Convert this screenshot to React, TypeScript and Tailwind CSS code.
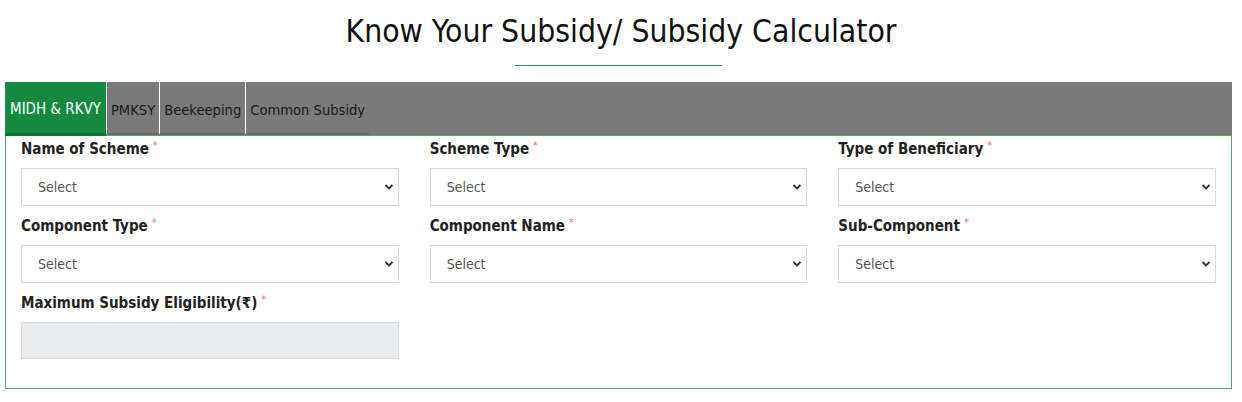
const fontStack = { fontFamily: '"DejaVu Sans Condensed", "DejaVu Sans", Tahoma, sans-serif' };

type Field = { label: string; kind: 'select' | 'input' };

const fields: Field[] = [
  { label: 'Name of Scheme', kind: 'select' },
  { label: 'Scheme Type', kind: 'select' },
  { label: 'Type of Beneficiary', kind: 'select' },
  { label: 'Component Type', kind: 'select' },
  { label: 'Component Name', kind: 'select' },
  { label: 'Sub-Component', kind: 'select' },
  { label: 'Maximum Subsidy Eligibility(₹)', kind: 'input' },
];

const tabs = ['MIDH & RKVY', 'PMKSY', 'Beekeeping', 'Common Subsidy'];

function Chevron() {
  return (
    <svg width="10" height="8" viewBox="0 0 10 8" aria-hidden="true">
      <polyline points="1.5,2 5,5.5 8.5,2" fill="none" stroke="#333" strokeWidth="1.8" />
    </svg>
  );
}

function FormField({ field }: { field: Field }) {
  return (
    <div className="flex flex-col">
      <label className="text-[15px] font-bold leading-[22px] text-[#222] mb-[8px]">
        {field.label}
        <sup className="ml-[4px] text-[11px] font-normal text-[#e07a7a] relative top-[-5px]">*</sup>
      </label>
      {field.kind === 'select' ? (
        <div className="h-[38px] border border-[#dcdcdc] bg-white flex items-center justify-between pl-[16px] pr-[4px] text-[14px] text-[#555]">
          <span>Select</span>
          <Chevron />
        </div>
      ) : (
        <div className="h-[37px] border border-[#dcdcdc] bg-[#e9ecef]" />
      )}
    </div>
  );
}

export default function App() {
  return (
    <div className="w-[1242px] h-[402px] bg-white overflow-hidden" style={fontStack}>
      <div className="flex flex-col items-center pt-[11px]">
        <h1 className="text-[31.6px] leading-[40px] text-[#111] font-normal">
          Know Your Subsidy/ Subsidy Calculator
        </h1>
        <div className="mt-[14px] w-[207px] h-px bg-[#2f8a47] -translate-x-[3px]" />
      </div>

      <div className="mt-[16px] ml-[5px] mr-[10px]">
        <div className="h-[53px] bg-[#7a7a7a] flex">
          {tabs.map((tab, i) => (
            <div
              key={tab}
              className={
                i === 0
                  ? 'h-[54px] bg-[#138a3e] border-b-[3px] border-[#0f6e31] text-white flex items-center pt-[4px] px-[5px] text-[15px]'
                  : 'h-full bg-[#7a7a7a] border-l border-white border-b-[2px] border-b-[#6a6a6a] text-[#1a1a1a] flex items-center pt-[4px] px-[4px] text-[14.6px]'
              }
            >
              {tab}
            </div>
          ))}
        </div>
        <div className="border border-[#5aa56b] pt-[2px] pb-[29px] px-[15px] grid grid-cols-3 gap-x-[31px] gap-y-[9px]">
          {fields.map((f) => (
            <FormField key={f.label} field={f} />
          ))}
        </div>
      </div>
    </div>
  );
}
